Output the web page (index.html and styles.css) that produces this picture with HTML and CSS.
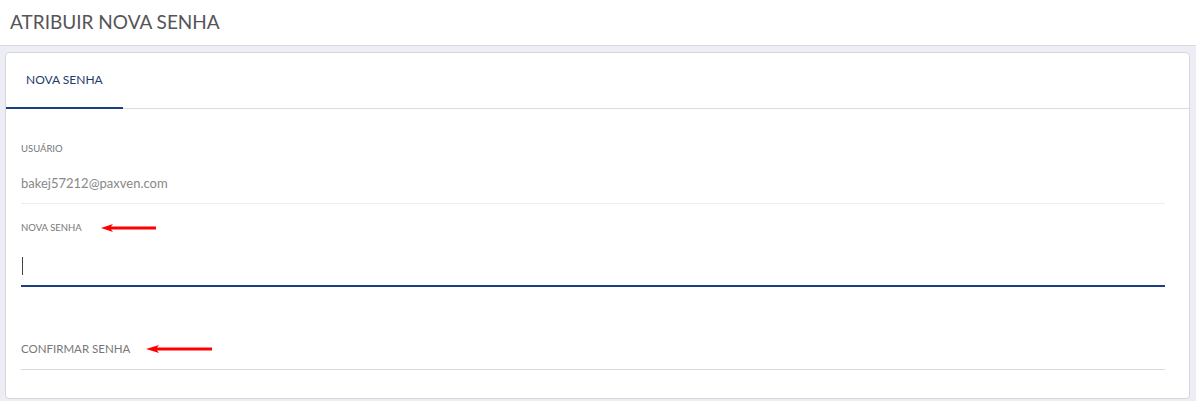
FILE: index.html
```html
<!DOCTYPE html>
<html lang="pt-BR">
<head>
<meta charset="utf-8">
<title>Atribuir nova senha</title>
<link rel="stylesheet" href="styles.css">
</head>
<body>
<header class="topbar">
  <h1 class="page-title">ATRIBUIR NOVA SENHA</h1>
</header>
<main class="content">
  <section class="card">
    <nav class="tabs">
      <div class="tab tab-active">NOVA SENHA</div>
    </nav>
    <form class="form">
      <div class="field field-readonly">
        <div class="field-label">USUÁRIO</div>
        <div class="field-value">bakej57212@paxven.com</div>
      </div>
      <div class="field field-focused">
        <div class="field-label label-with-arrow">NOVA SENHA
          <svg class="arrow arrow-short" width="56" height="10" viewBox="0 0 56 10"><path d="M0 5 L12 1 L10 3.6 L55 3.6 L55 6.6 L10 6.6 L12 9 Z" fill="#ff0000"/></svg>
        </div>
        <div class="input-area"><span class="caret"></span></div>
      </div>
      <div class="field field-empty">
        <div class="placeholder label-with-arrow">CONFIRMAR SENHA
          <svg class="arrow arrow-long" width="67" height="10" viewBox="0 0 67 10"><path d="M0 5 L13 1 L11 3.6 L66 3.6 L66 6.6 L11 6.6 L13 9 Z" fill="#ff0000"/></svg>
        </div>
      </div>
    </form>
  </section>
</main>
</body>
</html>
```
FILE: styles.css
```css
* { box-sizing: border-box; }
html, body { margin: 0; padding: 0; }
body {
  background: #ededf6;
  font-family: "Lato", "Open Sans", sans-serif;
  width: 1196px;
  height: 401px;
  overflow: hidden;
}
.topbar {
  height: 46px;
  background: #ffffff;
  border-bottom: 1px solid #d9d9de;
  padding-left: 10px;
  display: flex;
  align-items: center;
}
.page-title {
  margin: 0;
  font-size: 19px;
  font-weight: 400;
  color: #555558;
  padding-bottom: 2px;
}
.content {
  padding: 6px 6px 0 5px;
}
.card {
  background: #ffffff;
  border: 1px solid #d6d6dc;
  border-radius: 4px;
  height: 347px;
}
.tabs {
  height: 56px;
  border-bottom: 1px solid #dcdcdc;
  display: flex;
}
.tab {
  width: 117px;
  display: flex;
  align-items: center;
  padding-left: 20px;
  font-size: 12px;
  color: #1e3a6c;
  padding-bottom: 1px;
}
.tab-active {
  border-bottom: 2px solid #1c3f7e;
  margin-bottom: -1px;
}
.form {
  padding: 0 24px 0 15px;
  margin: 0;
}
.field-readonly {
  padding-top: 34px;
  height: 95px;
  border-bottom: 1px solid #ededed;
}
.field-label {
  font-size: 9.5px;
  color: #777;
  height: 12px;
  line-height: 12px;
}
.field-value {
  margin-top: 19px;
  font-size: 13px;
  color: #888;
  line-height: 18px;
}
.field-focused {
  padding-top: 18px;
}
.label-with-arrow {
  display: flex;
  align-items: center;
}
.arrow-short { margin-left: 19px; }
.arrow-long { margin-left: 16px; }
.input-area {
  height: 53px;
  border-bottom: 2px solid #1c3f7e;
  padding-top: 23px;
}
.caret {
  display: block;
  width: 1px;
  height: 18px;
  background: #444;
  margin-left: 1px;
}
.field-empty {
  padding-top: 54px;
  height: 83px;
  border-bottom: 1px solid #d9d9d9;
}
.placeholder {
  font-size: 11.5px;
  color: #777;
  height: 16px;
  line-height: 16px;
}
```
